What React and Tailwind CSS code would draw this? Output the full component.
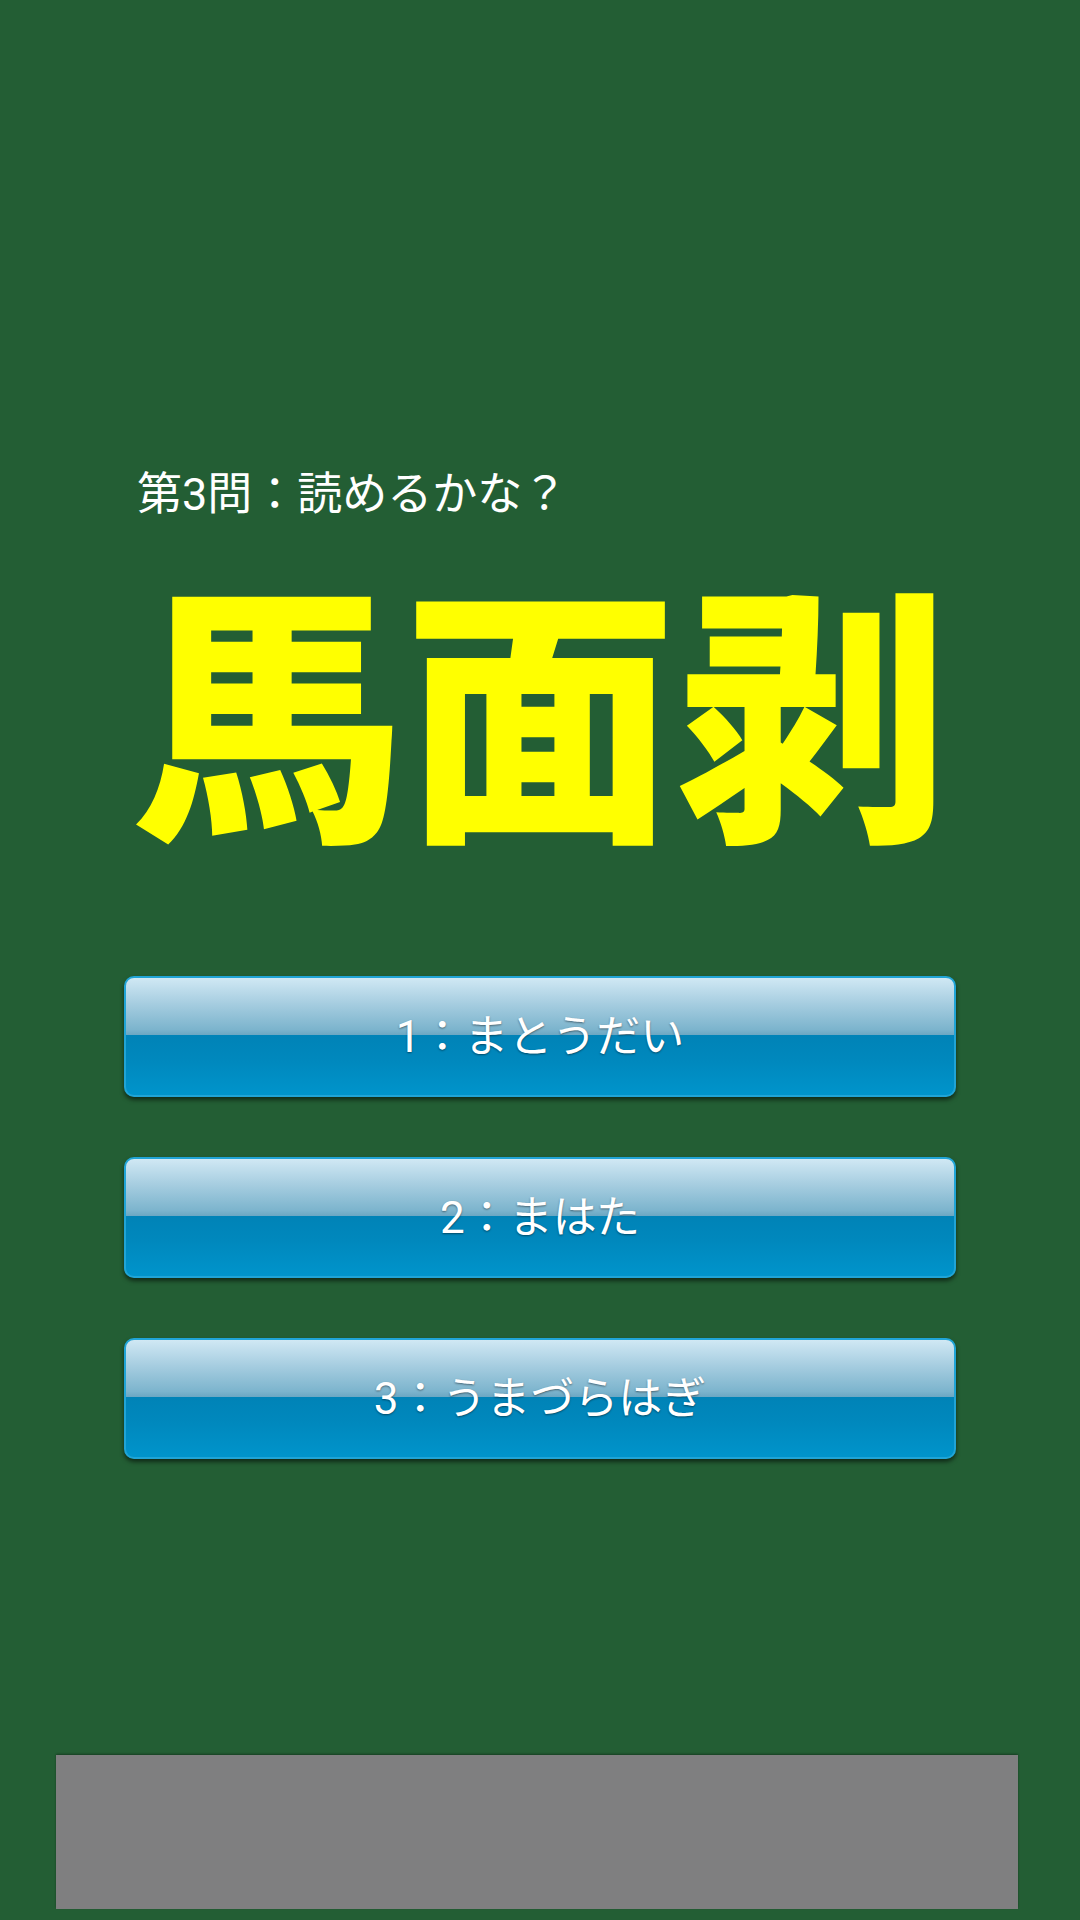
const choices = ['1：まとうだい', '2：まはた', '3：うまづらはぎ'];

export default function App() {
  return (
    <div className="flex h-[1920px] w-[1080px] flex-col bg-[#235e34] font-['Roboto','Noto_Sans_CJK_JP',sans-serif] text-white">
      <div className="pl-[137px] pt-[472px] text-[45px] leading-none">第3問：読めるかな？</div>

      <div className="mt-[74px] text-center text-[272px] font-black leading-none text-[#ffff00]">
        馬面剥
      </div>

      <div className="mt-[113px] flex flex-col gap-[60px] px-[124px]">
        {choices.map(c => (
          <button
            key={c}
            className="flex h-[121px] w-full items-center justify-center rounded-[10px] border-2 border-[#20a4d6] bg-[linear-gradient(to_bottom,#d0e8f4_0%,#a6cde0_22%,#7cb4cd_44%,#6aa6c2_49%,#0083b7_49%,#0088bd_70%,#0094cb_100%)] text-[44px] leading-none text-white shadow-[0_3px_4px_rgba(0,0,0,0.55)] [text-shadow:0_1px_2px_rgba(0,0,0,0.45)]"
          >
            {c}
          </button>
        ))}
      </div>

      <div className="mb-[11px] ml-[56px] mt-auto h-[154px] w-[962px] bg-[#7f7f80] shadow-[0_-1px_2px_rgba(0,0,0,0.35)]" />
    </div>
  );
}
